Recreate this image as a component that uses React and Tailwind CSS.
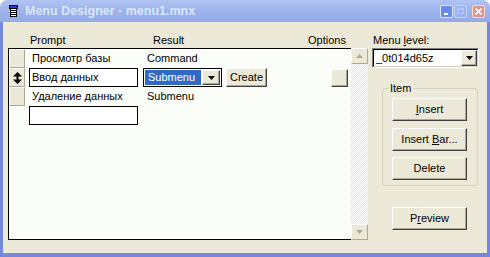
import React from 'react';

const btn =
  'bg-[#ece9d8] border border-t-white border-l-white border-r-[#404040] border-b-[#404040] shadow-[inset_-1px_-1px_0_#aca899] flex items-center justify-center';

function TitleIcon() {
  return (
    <svg width="9" height="12" viewBox="0 0 9 12" className="shrink-0">
      <rect x="0.5" y="0.5" width="8" height="3" fill="#1d44e0" stroke="#000" />
      <rect x="1.5" y="3.5" width="6" height="8" fill="#fff" stroke="#000" />
      <line x1="2" y1="5.5" x2="7" y2="5.5" stroke="#000" />
      <line x1="2" y1="7.5" x2="7" y2="7.5" stroke="#000" />
      <line x1="2" y1="9.5" x2="7" y2="9.5" stroke="#000" />
    </svg>
  );
}

function MoveIcon() {
  return (
    <svg width="9" height="12" viewBox="0 0 9 12">
      <polygon points="4.5,0 9,4.5 0,4.5" fill="#000" />
      <rect x="3.5" y="4" width="2" height="4" fill="#000" />
      <polygon points="0,7.5 9,7.5 4.5,12" fill="#000" />
    </svg>
  );
}

function Arrow({ down = true, color = '#000' }) {
  return (
    <svg width="7" height="4" viewBox="0 0 7 4">
      {down ? (
        <polygon points="0,0 7,0 3.5,4" fill={color} />
      ) : (
        <polygon points="0,4 7,4 3.5,0" fill={color} />
      )}
    </svg>
  );
}

function RowButton({ children }) {
  return (
    <div className="w-[16px] h-[19px] shrink-0 bg-[#ece9d8] border border-t-white border-l-white border-r-[#aca899] border-b-[#aca899] flex items-center justify-center">
      {children}
    </div>
  );
}

export default function App() {
  return (
    <div className="w-[490px] h-[257px] flex flex-col overflow-hidden bg-white font-['Liberation_Sans',Arial,sans-serif] text-[11px] leading-[13px] text-black select-none">
      {/* title bar */}
      <div className="h-[22px] shrink-0 flex items-center rounded-t-[7px] bg-gradient-to-b from-[#b0c3f2] via-[#9cb3eb] to-[#94abe7] pl-[9px] pr-[5px]">
        <TitleIcon />
        <span className="ml-[7px] mt-[1px] font-bold text-[12.5px] text-[#dce6f9]">
          Menu Designer - menu1.mnx
        </span>
        <div className="ml-auto flex items-center">
          <div className="w-[13px] h-[13px] rounded-[2px] border border-[#dfe7fb] bg-[#6b8ce6] flex items-end pl-[3px] pb-[2px]">
            <div className="w-[4px] h-[2px] bg-white" />
          </div>
          <div className="ml-[1px] w-[13px] h-[13px] rounded-[2px] border border-[#c3d1f5] bg-[#9fb4ec] flex items-center justify-center">
            <div className="w-[7px] h-[6px] border border-t-2 border-[#b9c8f2]" />
          </div>
          <div className="ml-[5px] w-[13px] h-[13px] rounded-[2px] border border-[#f3dcd6] bg-[#dc978c] flex items-center justify-center">
            <svg width="7" height="7" viewBox="0 0 7 7">
              <path d="M0.5 0.5 L6.5 6.5 M6.5 0.5 L0.5 6.5" stroke="#fff" strokeWidth="1.6" />
            </svg>
          </div>
        </div>
      </div>

      {/* frame + client */}
      <div className="flex-1 flex bg-[#7588da] px-[3px] pb-[4px]">
        <div className="flex-1 flex bg-[#ece9d8]">
          {/* grid */}
          <div className="ml-[5px] pt-[12px] w-[360px] flex flex-col">
            <div className="h-[14px] flex">
              <span className="pl-[22px] w-[145px]">Prompt</span>
              <span className="w-[155px]">Result</span>
              <span>Options</span>
            </div>
            <div className="h-[192px] flex">
              <div className="w-[343px] bg-[#fbfdf9] border-l border-t border-b border-black flex flex-col">
                <div className="h-[19px] flex items-center">
                  <RowButton />
                  <div className="w-[118px] pl-[7px]">Просмотр базы</div>
                  <div className="pl-[4px]">Command</div>
                </div>
                <div className="h-[19px] flex items-center">
                  <RowButton>
                    <MoveIcon />
                  </RowButton>
                  <div className="w-[118px]">
                    <div className="ml-[4px] w-[109px] h-[19px] border border-black bg-white pl-[2px] flex items-center">
                      Ввод данных
                    </div>
                  </div>
                  <div className="w-[79px] h-[19px] border border-black bg-white flex items-center p-[1px]">
                    <div className="flex-1 h-full bg-[#316ac5] text-white pl-[3px] flex items-center">
                      Submenu
                    </div>
                    <div className={`${btn} w-[18px] h-[15px] ml-[1px]`}>
                      <Arrow />
                    </div>
                  </div>
                  <div className={`${btn} ml-[4px] w-[41px] h-[19px]`}>Create</div>
                  <div className={`${btn} ml-[64px] w-[17px] h-[18px]`} />
                </div>
                <div className="h-[19px] flex items-center">
                  <RowButton />
                  <div className="w-[118px] pl-[7px]">Удаление данных</div>
                  <div className="pl-[4px]">Submenu</div>
                </div>
                <div className="h-[19px] flex items-center">
                  <div className="w-[16px]" />
                  <div className="ml-[4px] w-[109px] h-[19px] border border-black bg-white" />
                </div>
              </div>
              {/* scrollbar */}
              <div className="w-[17px] flex flex-col justify-between bg-[repeating-conic-gradient(#ffffff_0%_25%,#e6e3d3_0%_50%)] bg-[length:2px_2px]">
                <div className={`${btn} h-[16px] border-r-[#aca899] border-b-[#aca899] shadow-none`}>
                  <Arrow down={false} color="#aca899" />
                </div>
                <div className={`${btn} h-[16px] border-r-[#aca899] border-b-[#aca899] shadow-none`}>
                  <Arrow color="#aca899" />
                </div>
              </div>
            </div>
          </div>

          {/* right panel */}
          <div className="ml-[4px] pt-[12px] w-[107px] flex flex-col">
            <div className="h-[14px] pl-[1px]">
              Menu <u>l</u>evel:
            </div>
            <div className="h-[20px] border border-t-[#808080] border-l-[#808080] border-r-white border-b-white">
              <div className="h-full border border-t-black border-l-black border-r-[#d4d0c8] border-b-[#d4d0c8] bg-white flex items-center">
                <span className="flex-1 pl-[2px]">_0t014d65z</span>
                <div className={`${btn} w-[16px] h-full`}>
                  <Arrow />
                </div>
              </div>
            </div>

            <div className="relative mt-[20px] ml-[10px] w-[96px] border border-[#d0d0bf] rounded-[3px] pt-[9px] pb-[5px] pl-[9px]">
              <span className="absolute -top-[7px] left-[5px] px-[2px] bg-[#ece9d8]">Item</span>
              <div className={`${btn} w-[75px] h-[23px]`}>
                <span>
                  <u>I</u>nsert
                </span>
              </div>
              <div className={`${btn} mt-[7px] w-[75px] h-[23px]`}>
                <span>
                  Insert <u>B</u>ar...
                </span>
              </div>
              <div className={`${btn} mt-[6px] w-[75px] h-[23px]`}>Delete</div>
            </div>

            <div className={`${btn} mt-[21px] ml-[20px] w-[75px] h-[23px]`}>
              <span>
                P<u>r</u>eview
              </span>
            </div>
          </div>
        </div>
      </div>
    </div>
  );
}
